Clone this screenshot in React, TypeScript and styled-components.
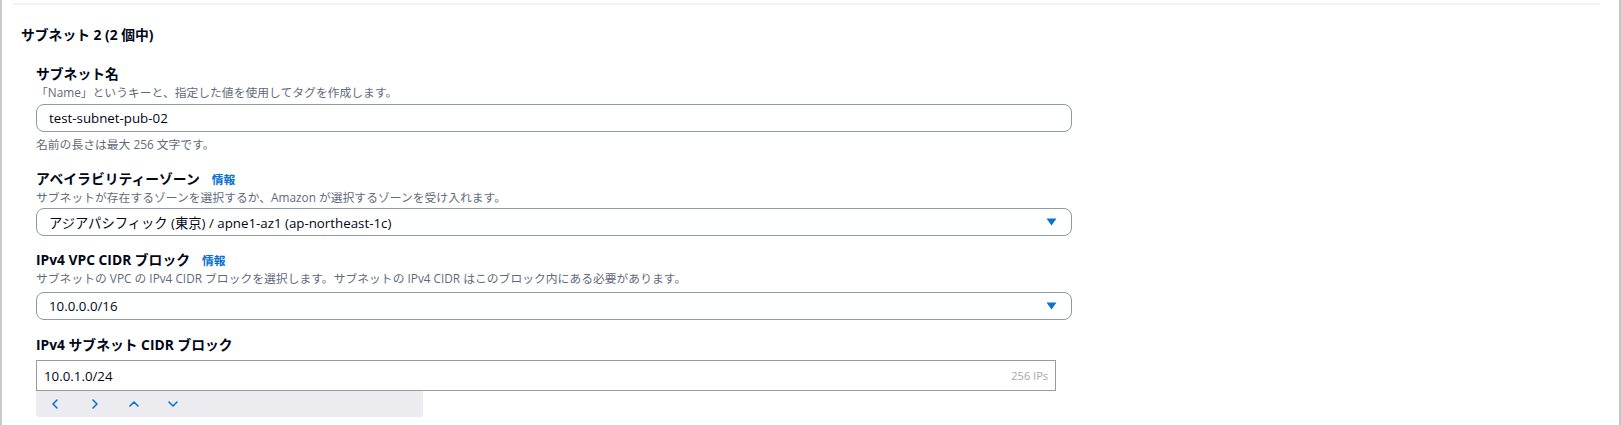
import styled, { createGlobalStyle } from "styled-components";

const GlobalStyle = createGlobalStyle`
  html, body {
    margin: 0;
    padding: 0;
    background: #ffffff;
  }
  body {
    font-family: "Open Sans", "Noto Sans CJK JP", sans-serif;
    color: #000716;
  }
`;

const BLUE = "#0972d3";

const Frame = styled.div`
  width: 1621px;
  height: 425px;
  box-sizing: border-box;
  border-left: 2px solid #c9c9cc;
  border-right: 2px solid #c4c4c8;
  overflow: hidden;
`;

const TopRule = styled.div`
  height: 2px;
  margin: 3px 19px 0 11px;
  background: #f3f3f4;
`;

const Section = styled.section`
  padding: 20px 0 0 19px;
`;

const SectionTitle = styled.h3`
  margin: 0;
  font-size: 13.8px;
  line-height: 20px;
  font-weight: 700;
`;

const Fields = styled.div`
  display: flex;
  flex-direction: column;
  padding-left: 15px;
  margin-top: 20px;
`;

const Field = styled.div<{ gapAfter?: number }>`
  display: flex;
  flex-direction: column;
  margin-bottom: ${p => p.gapAfter ?? 0}px;
`;

const LabelRow = styled.div`
  display: flex;
  align-items: baseline;
  gap: 12px;
`;

const Label = styled.label`
  font-size: 13.8px;
  line-height: 18px;
  font-weight: 700;
`;

const InfoLink = styled.a`
  font-size: 11.8px;
  font-weight: 700;
  color: ${BLUE};
  text-decoration: none;
`;

const Description = styled.div`
  font-size: 11.8px;
  line-height: 16px;
  color: #5f6b7a;
  margin-top: 1px;
`;

const Hint = styled(Description)`
  margin-top: 4px;
`;

const RoundBox = styled.div<{ gap?: number }>`
  margin-top: ${p => p.gap ?? 3}px;
  width: 1036px;
  height: 28px;
  box-sizing: border-box;
  border: 1px solid #8d99a8;
  border-radius: 8px;
  display: flex;
  align-items: center;
  padding: 0 12px;
  font-size: 13.3px;
  background: #ffffff;
`;

const BoxText = styled.span`
  flex: 1;
  white-space: nowrap;
`;

const Caret = styled.svg`
  width: 11px;
  height: 8px;
  margin-right: 2px;
`;

const CidrInput = styled.div`
  margin-top: 6px;
  width: 1020px;
  height: 31px;
  box-sizing: border-box;
  border: 1px solid #9a9aa0;
  display: flex;
  align-items: center;
  padding: 0 7px;
  font-size: 13.3px;
`;

const Suffix = styled.span`
  font-size: 11px;
  color: #a3a8b0;
`;

const Toolbar = styled.div`
  display: flex;
  align-items: center;
  width: 387px;
  height: 26px;
  background: #ebebf0;
  border-radius: 0 0 3px 3px;
`;

const ArrowButton = styled.button`
  width: 39px;
  height: 26px;
  border: none;
  background: none;
  padding: 0;
  display: flex;
  align-items: center;
  justify-content: center;
  cursor: pointer;
`;

const Chevron = ({ dir }: { dir: "left" | "right" | "up" | "down" }) => {
  const paths = {
    left: "M6 1 L2 5 L6 9",
    right: "M3 1 L7 5 L3 9",
    up: "M1 7 L5 3 L9 7",
    down: "M1 3 L5 7 L9 3",
  };
  return (
    <svg width="10" height="10" viewBox="0 0 10 10">
      <path d={paths[dir]} fill="none" stroke={BLUE} strokeWidth="1.6" strokeLinecap="round" strokeLinejoin="round" />
    </svg>
  );
};

const DownCaret = () => (
  <Caret viewBox="0 0 11 8">
    <path d="M0.5 0.5 H10.5 L5.5 7.5 Z" fill={BLUE} />
  </Caret>
);

export default function App() {
  return (
    <>
      <GlobalStyle />
      <Frame>
        <TopRule />
        <Section>
          <SectionTitle>サブネット 2 (2 個中)</SectionTitle>
          <Fields>
            <Field gapAfter={18}>
              <Label>サブネット名</Label>
              <Description>「Name」というキーと、指定した値を使用してタグを作成します。</Description>
              <RoundBox gap={4}>
                <BoxText>test-subnet-pub-02</BoxText>
              </RoundBox>
              <Hint>名前の長さは最大 256 文字です。</Hint>
            </Field>
            <Field gapAfter={15}>
              <LabelRow>
                <Label>アベイラビリティーゾーン</Label>
                <InfoLink href="#">情報</InfoLink>
              </LabelRow>
              <Description>サブネットが存在するゾーンを選択するか、Amazon が選択するゾーンを受け入れます。</Description>
              <RoundBox>
                <BoxText>アジアパシフィック (東京) / apne1-az1 (ap-northeast-1c)</BoxText>
                <DownCaret />
              </RoundBox>
            </Field>
            <Field gapAfter={16}>
              <LabelRow>
                <Label>IPv4 VPC CIDR ブロック</Label>
                <InfoLink href="#">情報</InfoLink>
              </LabelRow>
              <Description>サブネットの VPC の IPv4 CIDR ブロックを選択します。サブネットの IPv4 CIDR はこのブロック内にある必要があります。</Description>
              <RoundBox gap={6}>
                <BoxText>10.0.0.0/16</BoxText>
                <DownCaret />
              </RoundBox>
            </Field>
            <Field>
              <Label>IPv4 サブネット CIDR ブロック</Label>
              <CidrInput>
                <BoxText>10.0.1.0/24</BoxText>
                <Suffix>256 IPs</Suffix>
              </CidrInput>
              <Toolbar>
                <ArrowButton aria-label="left"><Chevron dir="left" /></ArrowButton>
                <ArrowButton aria-label="right"><Chevron dir="right" /></ArrowButton>
                <ArrowButton aria-label="up"><Chevron dir="up" /></ArrowButton>
                <ArrowButton aria-label="down"><Chevron dir="down" /></ArrowButton>
              </Toolbar>
            </Field>
          </Fields>
        </Section>
      </Frame>
    </>
  );
}
